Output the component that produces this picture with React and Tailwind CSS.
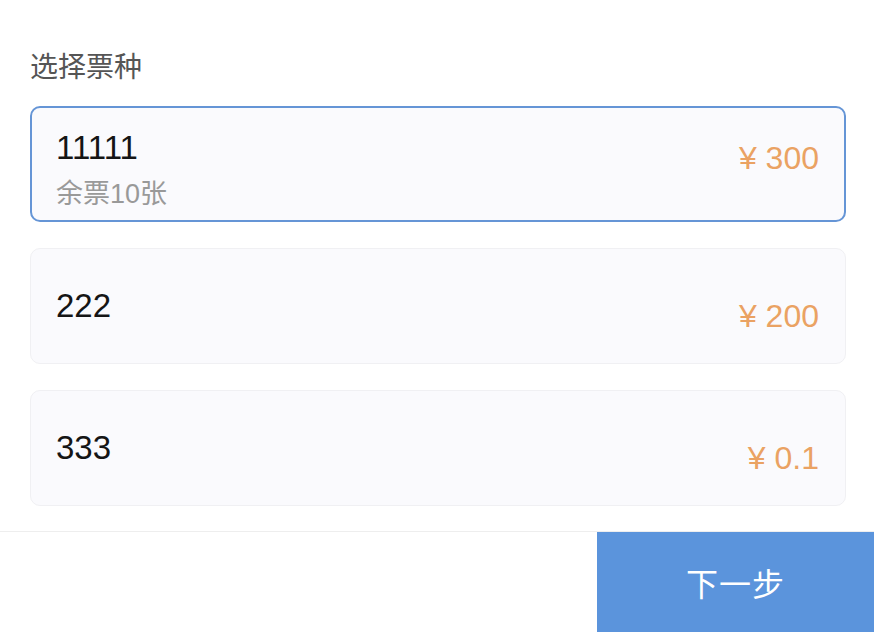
const tickets = [
  { name: "11111", remain: "余票10张", price: "¥ 300", selected: true },
  { name: "222", price: "¥ 200" },
  { name: "333", price: "¥ 0.1" },
];

export default function App() {
  return (
    <div className="w-[874px] h-[632px] bg-white flex flex-col font-['Liberation_Sans','Noto_Sans_CJK_SC',sans-serif]">
      <div className="flex-1 pl-[30px] pr-[28px] pt-[48px]">
        <div className="text-[28px] leading-[40px] text-[#555] mb-[18px]">选择票种</div>
        <div className="flex flex-col gap-[26px]">
          {tickets.map((t) => (
            <div
              key={t.name}
              className={
                "h-[116px] rounded-[10px] bg-[#fafafd] flex flex-col justify-center " +
                (t.selected
                  ? "border-2 border-[#6595d6] pl-[24px] pr-[25px]"
                  : "border border-[#f0f0f3] pl-[25px] pr-[26px]")
              }
            >
              <div className="h-[60px] flex items-center justify-between">
                <span className="text-[33px] leading-[60px] text-[#151515]">{t.name}</span>
                <span className="text-[32px] leading-[40px] mt-[20px] text-[#eaa263]">
                  {t.price}
                </span>
              </div>
              {t.remain && <div className="text-[27px] leading-[32px] text-[#999]">{t.remain}</div>}
            </div>
          ))}
        </div>
      </div>
      <div className="h-[101px] border-t border-[#eeeeee] flex justify-end">
        <button className="w-[277px] h-full pt-[6px] bg-[#5b94dc] text-white text-[32px] tracking-[1px]">下一步</button>
      </div>
    </div>
  );
}
